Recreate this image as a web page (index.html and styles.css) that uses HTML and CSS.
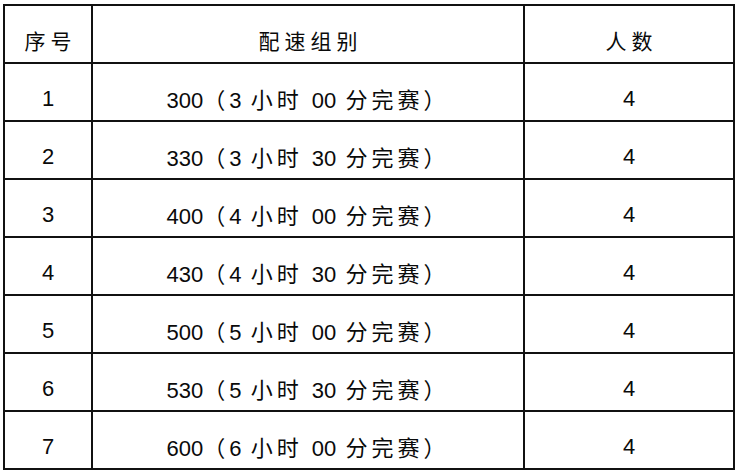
FILE: index.html
```html
<!DOCTYPE html>
<html lang="zh">
<head>
<meta charset="utf-8">
<link rel="stylesheet" href="styles.css">
</head>
<body>
<div class="wrap">
<table class="pace">
  <colgroup>
    <col class="c1">
    <col class="c2">
    <col class="c3">
  </colgroup>
  <thead>
    <tr><th><span class="cjk hd">序号</span></th><th><span class="cjk hd">配速组别</span></th><th><span class="cjk hd">人数</span></th></tr>
  </thead>
  <tbody>
    <tr><td>1</td><td class="pace-name">300<span class="cjk">（</span>3 <span class="cjk">小时</span> 00 <span class="cjk">分完赛）</span></td><td>4</td></tr>
    <tr><td>2</td><td class="pace-name">330<span class="cjk">（</span>3 <span class="cjk">小时</span> 30 <span class="cjk">分完赛）</span></td><td>4</td></tr>
    <tr><td>3</td><td class="pace-name">400<span class="cjk">（</span>4 <span class="cjk">小时</span> 00 <span class="cjk">分完赛）</span></td><td>4</td></tr>
    <tr><td>4</td><td class="pace-name">430<span class="cjk">（</span>4 <span class="cjk">小时</span> 30 <span class="cjk">分完赛）</span></td><td>4</td></tr>
    <tr><td>5</td><td class="pace-name">500<span class="cjk">（</span>5 <span class="cjk">小时</span> 00 <span class="cjk">分完赛）</span></td><td>4</td></tr>
    <tr><td>6</td><td class="pace-name">530<span class="cjk">（</span>5 <span class="cjk">小时</span> 30 <span class="cjk">分完赛）</span></td><td>4</td></tr>
    <tr><td>7</td><td class="pace-name">600<span class="cjk">（</span>6 <span class="cjk">小时</span> 00 <span class="cjk">分完赛）</span></td><td>4</td></tr>
  </tbody>
</table>
</div>
</body>
</html>
```
FILE: styles.css
```css
html, body {
  margin: 0;
  padding: 0;
  background: #fff;
}
.wrap {
  padding: 4px 3px 0 3px;
}
.pace {
  border-collapse: collapse;
  width: 730px;
  table-layout: fixed;
  font-family: "Liberation Sans", Arial, "Noto Sans CJK SC", sans-serif;
  font-size: 22px;
  color: #0a0a0a;
}
.c1 { width: 88px; }
.c2 { width: 432px; }
.c3 { width: 210px; }
.pace th, .pace td {
  border: 2px solid #111;
  height: 42px;
  padding: 14px 0 0 0;
  text-align: center;
  vertical-align: middle;
  font-weight: normal;
  white-space: nowrap;
  line-height: 24px;
}
.pace-name {
  word-spacing: 3px;
}
.cjk {
  font-family: "Noto Sans CJK SC", sans-serif;
  font-size: 22px;
  letter-spacing: 4px;
}
.hd {
  font-size: 21px;
  letter-spacing: 5px;
  margin-right: -5px;
}
```
